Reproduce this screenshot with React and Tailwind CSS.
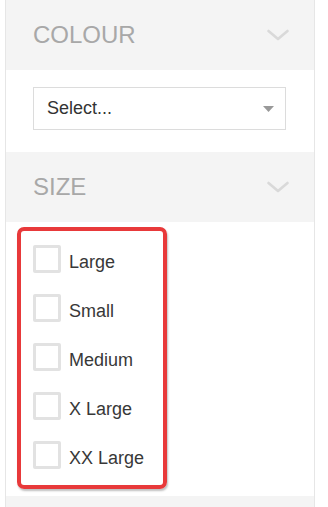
import React from 'react';

const sizes = ['Large', 'Small', 'Medium', 'X Large', 'XX Large'];

function Chevron() {
  return (
    <svg width="24" height="12" viewBox="0 0 24 12" fill="none">
      <path d="M2.5 2l9.5 8 9.5-8" stroke="#d9d9d9" strokeWidth="2.6" strokeLinecap="round" strokeLinejoin="round" />
    </svg>
  );
}

function Header({ title }) {
  return (
    <div className="flex h-[70px] items-center justify-between bg-[#f4f4f4] pl-[27px] pr-[24px]">
      <span className="text-[24px] leading-none text-[#a8a8a8]">{title}</span>
      <Chevron />
    </div>
  );
}

export default function App() {
  return (
    <div
      className="h-[507px] w-[328px] overflow-hidden bg-white"
      style={{ fontFamily: '"Liberation Sans", Arial, sans-serif' }}
    >
      <div className="ml-[5px] h-full w-[310px] border-x border-[#e6e6e6]">
        <Header title="COLOUR" />
        <div className="pl-[27px] pt-[17px] pb-[22px]">
          <div className="flex h-[43px] w-[253px] items-center justify-between border border-[#dcdcdc] bg-white pl-[13px] pr-[11px]">
            <span className="text-[18px] text-[#333]">Select...</span>
            <svg width="11" height="6" viewBox="0 0 11 6">
              <path d="M0 0h11L5.5 6z" fill="#999" />
            </svg>
          </div>
        </div>
        <Header title="SIZE" />
        <div className="pl-[11px] pt-[5px] pb-[7px]">
          <div className="flex w-[150px] flex-col gap-[21px] rounded-[7px] border-[4px] border-[#e8393a] pt-[14px] pb-[16px] pl-[12px] shadow-[1px_2px_2px_rgba(0,0,0,0.25)]">
            {sizes.map((s) => (
              <label key={s} className="flex h-[28px] items-center gap-[8px]">
                <span className="block h-[28px] w-[28px] rounded-[2px] border-[3px] border-[#e2e2e2] bg-white" />
                <span className="pt-[5px] text-[18px] leading-none text-[#383838]">{s}</span>
              </label>
            ))}
          </div>
        </div>
        <div className="h-[20px] bg-[#f4f4f4]" />
      </div>
    </div>
  );
}
